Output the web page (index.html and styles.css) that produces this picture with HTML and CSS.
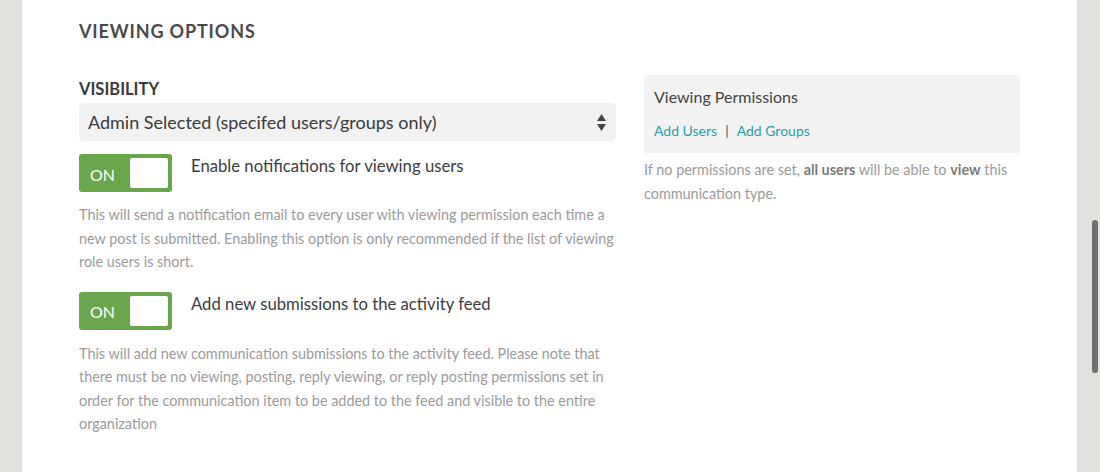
FILE: index.html
```html
<!DOCTYPE html>
<html>
<head>
<meta charset="utf-8">
<link rel="stylesheet" href="styles.css">
</head>
<body>
<div class="page">
  <div class="gutter-left"></div>
  <main class="main">
    <h2 class="section-title">VIEWING OPTIONS</h2>
    <div class="columns">
      <div class="col-left">
        <div class="field-label">VISIBILITY</div>
        <div class="select">
          <span class="select-text">Admin Selected (specifed users/groups only)</span>
          <svg class="select-arrows" width="9" height="17" viewBox="0 0 9 17"><path d="M4.5 0 L9 7 L0 7 Z M0 10 L9 10 L4.5 17 Z" fill="#444"/></svg>
        </div>
        <div class="toggle-row">
          <div class="toggle"><span class="toggle-on">ON</span><span class="knob"></span></div>
          <div class="toggle-label">Enable notifications for viewing users</div>
        </div>
        <p class="desc">This will send a notification email to every user with viewing permission each time a new post is submitted. Enabling this option is only recommended if the list of viewing role users is short.</p>
        <div class="toggle-row second">
          <div class="toggle"><span class="toggle-on">ON</span><span class="knob"></span></div>
          <div class="toggle-label">Add new submissions to the activity feed</div>
        </div>
        <p class="desc desc-2">This will add new communication submissions to the activity feed. Please note that there must be no viewing, posting, reply viewing, or reply posting permissions set in order for the communication item to be added to the feed and visible to the entire organization</p>
      </div>
      <div class="col-right">
        <div class="perm-box">
          <div class="perm-title">Viewing Permissions</div>
          <div class="perm-links"><a class="link">Add Users</a><span class="sep">|</span><a class="link">Add Groups</a></div>
        </div>
        <p class="perm-note">If no permissions are set, <b>all users</b> will be able to <b>view</b> this communication type.</p>
      </div>
    </div>
  </main>
  <div class="gutter-right"><div class="thumb"></div></div>
</div>
</body>
</html>
```

FILE: styles.css
```css
* { box-sizing: border-box; }
html, body { margin: 0; padding: 0; }
body {
  background: #e1e1dd;
  font-family: Lato, "Open Sans", sans-serif;
  width: 1100px;
  height: 472px;
  overflow: hidden;
}
.page {
  display: flex;
  height: 472px;
}
.gutter-left {
  width: 22px;
  background: #e1e1dd;
}
.main {
  width: 1055px;
  background: #ffffff;
  padding: 19px 0 0 57px;
}
.gutter-right {
  width: 23px;
  background: #e1e1dd;
  padding: 220px 0 0 15px;
}
.thumb {
  width: 6px;
  height: 153px;
  background: #6f6f6f;
  border-radius: 3px;
}
.section-title {
  margin: 0;
  font-size: 18px;
  line-height: 24px;
  font-weight: 700;
  letter-spacing: 0.85px;
  color: #4a4a4a;
}
.columns {
  display: flex;
  gap: 28px;
  margin-top: 32px;
}
.col-left {
  width: 537px;
}
.col-right {
  width: 376px;
}
.field-label {
  font-size: 16.5px;
  line-height: 22px;
  font-weight: 700;
  color: #3a3a3a;
  margin-top: 3px;
}
.select {
  margin-top: 3px;
  height: 38px;
  background: #f2f2f2;
  border-radius: 5px;
  display: flex;
  align-items: center;
  justify-content: space-between;
  padding: 0 10px 0 9px;
}
.select-text {
  font-size: 18px;
  color: #3a3a3a;
}
.select-arrows { display: block; }
.toggle-row {
  display: flex;
  align-items: flex-start;
  margin-top: 13px;
}
.toggle-row.second { margin-top: 18px; }
.toggle {
  width: 93px;
  height: 38px;
  background: #6aa64c;
  border-radius: 3px;
  display: flex;
  align-items: center;
  justify-content: space-between;
  padding: 4px 4px 4px 11px;
}
.toggle-on {
  color: #ffffff;
  font-size: 16px;
  font-weight: 400;
  margin-top: 2px;
}
.knob {
  width: 38px;
  height: 30px;
  background: #ffffff;
  border-radius: 2px;
}
.toggle-label {
  margin-left: 19px;
  font-size: 16.7px;
  line-height: 24px;
  color: #3d3d3d;
}
.desc {
  margin: 11px -4px 0 0;
  font-size: 14.4px;
  line-height: 23.5px;
  color: #9b9b9b;
}
.desc-2 { margin-top: 12px; }
.perm-box {
  background: #f3f3f3;
  height: 78px;
  padding: 11px 10px 0 10px;
}
.perm-title {
  font-size: 16px;
  line-height: 22px;
  color: #444444;
}
.perm-links {
  margin-top: 13px;
  font-size: 14px;
  line-height: 20px;
  color: #444;
}
.link { color: #2a9eac; text-decoration: none; }
.sep { margin: 0 8px; color: #555; }
.perm-note {
  margin: 5px 0 0;
  font-size: 14.4px;
  line-height: 23.5px;
  color: #9b9b9b;
}
.perm-note b { color: #7a7a7a; font-weight: 700; }
```
